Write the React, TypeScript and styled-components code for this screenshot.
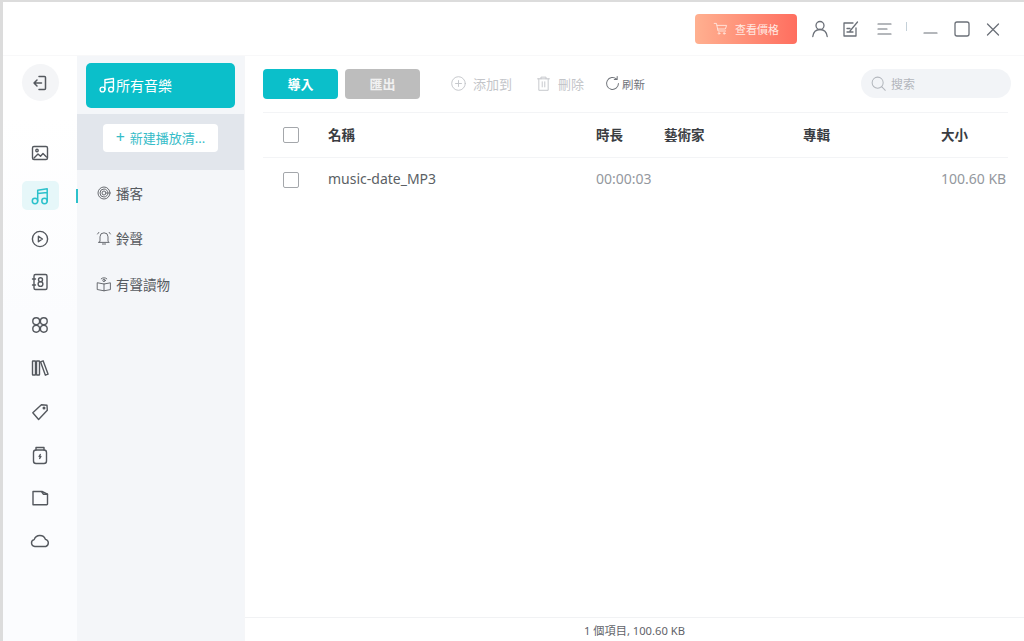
import * as React from 'react';
import styled, { createGlobalStyle } from 'styled-components';

const FONT = '"Noto Sans", "Noto Sans CJK TC", sans-serif';

const GlobalStyle = createGlobalStyle`
  html, body {
    margin: 0;
    padding: 0;
    background: #dcdcdc;
    font-family: ${FONT};
    overflow: hidden;
  }
  * {
    box-sizing: border-box;
  }
`;

const Page = styled.div`
  width: 1024px;
  height: 641px;
  padding: 2px 0 0 3px;
  background: #dcdcdc;
`;

const Window = styled.div`
  width: 100%;
  height: 100%;
  display: flex;
  flex-direction: column;
  background: #ffffff;
`;

const TitleBar = styled.header`
  height: 54px;
  flex: none;
  display: flex;
  align-items: center;
  padding: 0 21px 0 0;
  justify-content: flex-end;
  border-bottom: 1px solid #f8f8f9;
`;

const PriceButton = styled.button`
  width: 102px;
  height: 30px;
  margin: 0 8px 0 0;
  padding: 0;
  border: 0;
  border-radius: 4px;
  display: flex;
  align-items: center;
  justify-content: center;
  gap: 6px;
  font: 400 11px ${FONT};
  color: #ffe9e2;
  background: linear-gradient(90deg, #ffb090, #ff6e5f);
`;

const TitleIcon = styled.span<{ $ml?: number }>`
  width: 20px;
  height: 20px;
  margin-left: ${(p) => p.$ml ?? 11}px;
  flex: none;
  display: flex;
  align-items: center;
  justify-content: center;
  color: #6b7078;
`;

const TitleDivider = styled.span`
  width: 1px;
  height: 9px;
  margin: 0 0 4px 11px;
  background: #c4d0d8;
`;

const Body = styled.div`
  flex: 1;
  min-height: 0;
  display: flex;
`;

const Rail = styled.nav`
  width: 74px;
  flex: none;
  padding-top: 8px;
  display: flex;
  flex-direction: column;
  align-items: center;
  background: linear-gradient(180deg, #ffffff, #ffffff 60px, #fbfcfe 260px);
`;

const BackButton = styled.button`
  width: 37px;
  height: 37px;
  margin: 0 0 37px;
  padding: 0;
  border: 0;
  border-radius: 50%;
  display: flex;
  align-items: center;
  justify-content: center;
  color: #54585e;
  background: #f4f5f7;
`;

const RailItem = styled.div<{ $active?: boolean }>`
  position: relative;
  width: 37px;
  height: 29px;
  margin-bottom: 14.2px;
  border-radius: 5px;
  display: flex;
  align-items: center;
  justify-content: center;
  color: ${(p) => (p.$active ? '#2cc1cb' : '#54585e')};
  background: ${(p) => (p.$active ? '#e6f7f9' : 'transparent')};

  ${(p) =>
    p.$active &&
    `&::after {
      content: '';
      position: absolute;
      left: 54px;
      top: 8px;
      width: 2px;
      height: 14px;
      background: #2cc1cb;
    }`}
`;

const SubMenu = styled.aside`
  width: 167px;
  flex: none;
  display: flex;
  flex-direction: column;
  background: #f4f6f9;
`;

const AllMusic = styled.div`
  height: 45px;
  margin: 7px 9px 6px;
  padding: 0 0 2px 12px;
  border-radius: 5px;
  display: flex;
  align-items: center;
  font-size: 14px;
  color: #ffffff;
  background: #0bbfca;
`;

const PlaylistBand = styled.div`
  height: 56px;
  padding: 10px 0 0 26px;
  background: #e2e6ec;
`;

const NewPlaylist = styled.button`
  width: 115px;
  height: 28px;
  padding: 0 0 2px;
  border: 0;
  border-radius: 4px;
  display: flex;
  align-items: center;
  justify-content: center;
  gap: 5px;
  font: 400 13px ${FONT};
  color: #35bcc8;
  background: #ffffff;
`;

const PlusMark = styled.span`
  font-size: 16px;
  line-height: 16px;
`;

const SubItem = styled.div`
  height: 45.5px;
  padding-left: 19px;
  display: flex;
  align-items: center;
  gap: 4px;
  font-size: 13.5px;
  color: #565a60;
`;

const Main = styled.main`
  flex: 1;
  min-width: 0;
  display: flex;
  flex-direction: column;
  border-left: 1px solid #f5f6f8;
`;

const Content = styled.div`
  flex: 1;
  min-height: 0;
  padding: 0 16px 0 18px;
`;

const Toolbar = styled.div`
  height: 57px;
  padding-bottom: 1px;
  display: flex;
  align-items: center;
  border-bottom: 1px solid #f3f4f6;
`;

const ActionButton = styled.button<{ $muted?: boolean }>`
  width: 75px;
  height: 30px;
  margin-right: 7px;
  padding: 0;
  border: 0;
  border-radius: 4px;
  font: 700 13px ${FONT};
  color: ${(p) => (p.$muted ? '#f1f1f1' : '#ffffff')};
  background: ${(p) => (p.$muted ? '#bdbdbd' : '#0bbfca')};
`;

const ToolAction = styled.div<{ $ml: number; $small?: boolean }>`
  margin-left: ${(p) => p.$ml}px;
  display: flex;
  align-items: center;
  gap: ${(p) => (p.$small ? 1 : 6)}px;
  font-size: ${(p) => (p.$small ? 11.5 : 13)}px;
  color: ${(p) => (p.$small ? '#70747a' : '#c3c5c9')};
`;

const Search = styled.div`
  width: 150px;
  height: 29px;
  margin-left: auto;
  margin-right: -3px;
  padding-left: 9px;
  border-radius: 15px;
  display: flex;
  align-items: center;
  gap: 4px;
  font-size: 12px;
  color: #b2b6bc;
  background: #f2f4f7;
`;

const Row = styled.div<{ $header?: boolean }>`
  height: ${(p) => (p.$header ? 45 : 44)}px;
  display: grid;
  grid-template-columns: 65px 268px 68px 139px 138px 1fr;
  align-items: center;
  font-size: ${(p) => (p.$header ? 13.5 : 14)}px;
  font-weight: ${(p) => (p.$header ? 700 : 400)};
  color: ${(p) => (p.$header ? '#3a3d42' : '#94989e')};
  border-bottom: ${(p) => (p.$header ? '1px solid #f3f4f6' : '0')};
`;

const Cell = styled.span<{ $lift: number }>`
  margin-bottom: ${(p) => p.$lift}px;
`;

const Check = styled.span`
  width: 16px;
  height: 16px;
  margin-left: 20px;
  border: 1px solid #a4a7ab;
  border-radius: 2px;
  background: #ffffff;
`;

const NameCell = styled(Cell)`
  color: #5b5f65;
`;

const Footer = styled.footer`
  height: 24px;
  flex: none;
  padding-top: 5px;
  border-top: 1px solid #f1f2f4;
  text-align: center;
  font-size: 11.2px;
  line-height: 16px;
  color: #5f6369;
`;

const Svg = ({ size = 20, children, sw = 1.4 }: { size?: number; children: React.ReactNode; sw?: number }) => (
  <svg
    width={size}
    height={size}
    viewBox="0 0 20 20"
    fill="none"
    stroke="currentColor"
    strokeWidth={sw}
    strokeLinecap="round"
    strokeLinejoin="round"
  >
    {children}
  </svg>
);

const MusicIcon = ({ size = 20 }: { size?: number }) => (
  <Svg size={size} sw={1.5}>
    <circle cx="5" cy="15" r="2.7" />
    <circle cx="14.5" cy="15" r="2.7" />
    <path d="M7.7 15V4.2L17.2 2.8V15M7.7 7.6l9.5-1.2" />
  </Svg>
);

const railIcons: React.ReactNode[] = [
  <Svg key="image">
    <rect x="2.5" y="3.5" width="15" height="13" rx="1.5" />
    <circle cx="7" cy="7.5" r="1.2" />
    <path d="M4 15l4-4 2.5 2.2 2.5-2.7 3.5 3.500" />
  </Svg>,
  <MusicIcon key="music" />,
  <Svg key="play">
    <circle cx="10" cy="10" r="7.6" />
    <path d="M8.4 7.2l4 2.8-4 2.8z" />
  </Svg>,
  <Svg key="contacts">
    <rect x="4" y="2.5" width="13" height="15" rx="1.5" />
    <circle cx="10.500" cy="7.700" r="2" />
    <circle cx="10.500" cy="12" r="2.400" />
    <path d="M2.500 7h3M2.500 13h3" />
  </Svg>,
  <Svg key="apps">
    <circle cx="6.200" cy="6.200" r="3.400" />
    <circle cx="13.800" cy="6.200" r="3.400" />
    <circle cx="6.200" cy="13.800" r="3.400" />
    <circle cx="13.800" cy="13.800" r="3.400" />
  </Svg>,
  <Svg key="books">
    <rect x="2.500" y="3" width="3" height="14" rx=".5" />
    <rect x="6.500" y="3" width="3" height="14" rx=".5" />
    <path d="M10.500 3.800l2.600-1 5 13.400-2.700 1z" />
  </Svg>,
  <Svg key="tag">
    <path d="M2.800 10.800l8.600-8 5.600.4.300 5-8.700 9.300z" />
    <circle cx="14" cy="6" r=".8" />
  </Svg>,
  <Svg key="jar">
    <rect x="3.500" y="5" width="13" height="13.500" rx="2.500" />
    <path d="M6 5V2.500h8V5" />
    <path d="M10.300 9.500l-1.200 2h1.800l-1.200 2" />
  </Svg>,
  <Svg key="folder">
    <path d="M3 3.500h8.500l1.800 2.700H17.500V16a.8.8 0 0 1-.8.8H3z" />
    <path d="M12 3.500l5.500 2.700" />
  </Svg>,
  <Svg key="cloud">
    <path d="M4.800 15.500a3.500 3.500 0 0 1-.6-6.900 6 6 0 0 1 11.300-.2 3.700 3.700 0 0 1 .3 7.100z" />
  </Svg>,
];

const App = () => (
  <>
    <GlobalStyle />
    <Page>
      <Window>
        <TitleBar>
          <PriceButton>
            <Svg size={16} sw={1.1}>
              <path d="M1.500 3h2.800l2 9.500h9.500M5 5.500h12l-1.500 4.500H6" />
              <circle cx="7.500" cy="15.500" r="1" />
              <circle cx="14" cy="15.500" r="1" />
            </Svg>
            查看價格
          </PriceButton>
          <TitleIcon $ml={5}>
            <Svg sw={1.3}>
              <circle cx="10" cy="6.500" r="4" />
              <path d="M2.800 17.500c.6-4.500 3.400-7 7.200-7s6.600 2.500 7.200 7" />
            </Svg>
          </TitleIcon>
          <TitleIcon>
            <Svg sw={1.3}>
              <path d="M15 9v8H3V4h9" />
              <path d="M6 13h6M6 9.500h3M9 12l7.500-9" />
            </Svg>
          </TitleIcon>
          <TitleIcon $ml={14}>
            <Svg sw={1.2}>
              <path d="M3 5h13M3 10h9M3 15h13" />
            </Svg>
          </TitleIcon>
          <TitleDivider />
          <TitleIcon $ml={14}>
            <Svg sw={1.2}>
              <path d="M3 14h13" />
            </Svg>
          </TitleIcon>
          <TitleIcon>
            <Svg sw={1.3}>
              <rect x="3" y="3" width="14" height="14" rx="2" />
            </Svg>
          </TitleIcon>
          <TitleIcon>
            <Svg sw={1.3}>
              <path d="M4.500 5l11 11M15.500 5l-11 11" />
            </Svg>
          </TitleIcon>
        </TitleBar>
        <Body>
          <Rail>
            <BackButton>
              <Svg sw={1.5}>
                <path d="M9 3.500h5.500a1 1 0 0 1 1 1v11a1 1 0 0 1-1 1H9M11.500 10H4M7 7l-3 3 3 3" />
              </Svg>
            </BackButton>
            {railIcons.map((icon, i) => (
              <RailItem key={i} $active={i === 1}>
                {icon}
              </RailItem>
            ))}
          </Rail>
          <SubMenu>
            <AllMusic>
              <MusicIcon size={18} />
              所有音樂
            </AllMusic>
            <PlaylistBand>
              <NewPlaylist>
                <PlusMark>+</PlusMark>
                新建播放清...
              </NewPlaylist>
            </PlaylistBand>
            <div>
              <SubItem>
                <Svg size={16} sw={1.1}>
                  <circle cx="10" cy="10" r="7.500" />
                  <circle cx="10" cy="10" r="5" />
                  <circle cx="10" cy="10" r="2.500" />
                </Svg>
                播客
              </SubItem>
              <SubItem>
                <Svg size={16} sw={1.1}>
                  <path d="M5 14V8.500a5 5 0 0 1 10 0V14l1.500 1.500h-13zM8 17.500h4M2 5l1.500-2M18 5l-1.500-2" />
                </Svg>
                鈴聲
              </SubItem>
              <SubItem>
                <Svg size={16} sw={1.1}>
                  <path d="M2 8.500l8 1.500 8-1.500V17l-8 1.500L2 17zM10 10v8.500" />
                  <circle cx="10" cy="5.500" r="1.500" />
                  <path d="M6.500 3.500a5 5 0 0 1 7 0" />
                </Svg>
                有聲讀物
              </SubItem>
            </div>
          </SubMenu>
          <Main>
            <Content>
              <Toolbar>
                <ActionButton>導入</ActionButton>
                <ActionButton $muted>匯出</ActionButton>
                <ToolAction $ml={23}>
                  <Svg size={17} sw={1.1}>
                    <circle cx="10" cy="10" r="8" />
                    <path d="M10 6.500v7M6.500 10h7" />
                  </Svg>
                  添加到
                </ToolAction>
                <ToolAction $ml={23}>
                  <Svg size={17} sw={1.1}>
                    <path d="M3 4.500h14M7 4.500V2.500h6v2M4.500 4.500V18h11V4.500M8.500 8v6M11.500 8v6" />
                  </Svg>
                  刪除
                </ToolAction>
                <ToolAction $ml={20} $small>
                  <Svg size={17} sw={1.2}>
                    <path d="M17 10a7 7 0 1 1-2.200-5.100M15.500 1.800v3.400h-3.400" />
                  </Svg>
                  刷新
                </ToolAction>
                <Search>
                  <Svg size={17} sw={1.2}>
                    <circle cx="9" cy="9" r="6.500" />
                    <path d="M14 14l4 4" />
                  </Svg>
                  搜索
                </Search>
              </Toolbar>
              <Row $header>
                <Check />
                <Cell $lift={2}>名稱</Cell>
                <Cell $lift={2}>時長</Cell>
                <Cell $lift={2}>藝術家</Cell>
                <Cell $lift={2}>專輯</Cell>
                <Cell $lift={2}>大小</Cell>
              </Row>
              <Row>
                <Check />
                <NameCell $lift={4}>music-date_MP3</NameCell>
                <Cell $lift={4}>00:00:03</Cell>
                <Cell $lift={4} />
                <Cell $lift={4} />
                <Cell $lift={4}>100.60 KB</Cell>
              </Row>
            </Content>
            <Footer>1 個項目, 100.60 KB</Footer>
          </Main>
        </Body>
      </Window>
    </Page>
  </>
);

export default App;
